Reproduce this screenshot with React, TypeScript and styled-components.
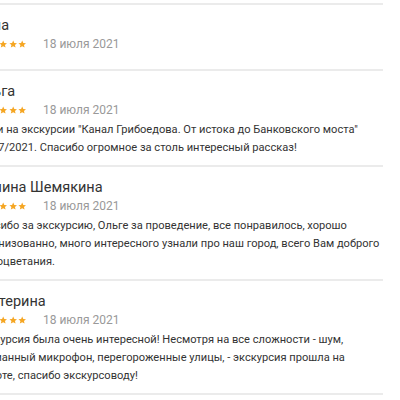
import React from "react";
import styled, { createGlobalStyle } from "styled-components";

const Global = createGlobalStyle`
  html, body { margin: 0; padding: 0; background: #fff; overflow: hidden; }
  body { font-family: Roboto, "Noto Sans", sans-serif; }
`;

const Viewport = styled.div`
  width: 400px;
  height: 400px;
  overflow: hidden;
  padding-top: 3px;
  box-sizing: border-box;
`;

const List = styled.div`
  width: 408px;
  margin-left: -25px;
  border-top: 2px solid #ebebeb;
`;

const Review = styled.div<{ $bare?: boolean }>`
  display: flex;
  flex-direction: column;
  padding: 12px 0 ${(p) => (p.$bare ? "16px" : "8px")};
  border-bottom: 2px solid #ebebeb;
`;

const Name = styled.div`
  font-size: 14.5px;
  line-height: 18px;
  color: #333;
`;

const Meta = styled.div`
  display: flex;
  align-items: center;
  gap: 16.5px;
  height: 18px;
`;

const Stars = styled.div`
  display: flex;
  gap: 1px;
  margin-left: 5.5px;
`;

const DateText = styled.span`
  font-size: 12px;
  color: #999;
  line-height: 18px;
`;

const Body = styled.p`
  margin: 2px 0 0;
  font-size: 11.1px;
  line-height: 18px;
  color: #333;
`;

const Star = () => (
  <svg width="8.4" height="8.4" viewBox="0 0 24 24">
    <path
      fill="#f5a623"
      d="M12 1.2l3.2 7.2 7.6.7-5.8 5.1 1.8 7.6L12 17.8l-6.8 4 1.8-7.6-5.8-5.1 7.6-.7z"
    />
  </svg>
);

const reviews = [
  { name: "Анна", date: "18 июля 2021", text: "" },
  {
    name: "Ольга",
    date: "18 июля 2021",
    text: "Были на экскурсии \"Канал Грибоедова. От истока до Банковского моста\" 17/07/2021. Спасибо огромное за столь интересный рассказ!",
  },
  {
    name: "Полина Шемякина",
    date: "18 июля 2021",
    text: "Спасибо за экскурсию, Ольге за проведение, все понравилось, хорошо организованно, много интересного узнали про наш город, всего Вам доброго и процветания.",
  },
  {
    name: "Екатерина",
    date: "18 июля 2021",
    text: "Экскурсия была очень интересной! Несмотря на все сложности - шум, сломанный микрофон, перегороженные улицы, - экскурсия прошла на высоте, спасибо экскурсоводу!",
  },
];

export default function App() {
  return (
    <Viewport>
      <Global />
      <List>
        {reviews.map((r, i) => (
          <Review key={i} $bare={!r.text}>
            <Name>{r.name}</Name>
            <Meta>
              <Stars>
                {[0, 1, 2, 3, 4].map((s) => (
                  <Star key={s} />
                ))}
              </Stars>
              <DateText>{r.date}</DateText>
            </Meta>
            {r.text && <Body>{r.text}</Body>}
          </Review>
        ))}
      </List>
    </Viewport>
  );
}
